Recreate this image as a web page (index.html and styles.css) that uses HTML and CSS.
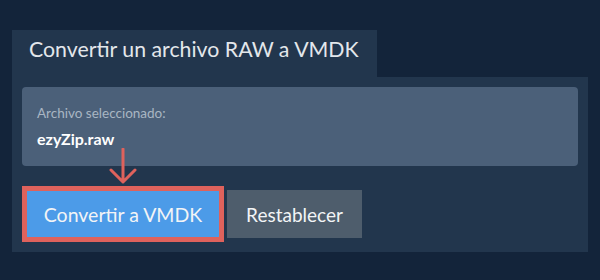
FILE: index.html
```html
<!DOCTYPE html>
<html lang="es">
<head>
  <meta charset="UTF-8" />
  <meta name="viewport" content="width=device-width, initial-scale=1.0"/>
  <title>Convertir RAW a VMDK</title>
  <link rel="stylesheet" href="styles.css">
</head>
<body>
  <div class="converter">
    <div class="tab">
      <h2>Convertir un archivo RAW a VMDK</h2>
    </div>
    <div class="panel">
      <div class="file-info">
        <p class="file-label">Archivo seleccionado:</p>
        <p class="file-name">ezyZip.raw</p>
      </div>

      <div class="actions">
        <div class="highlight">
          <button class="btn btn-convert">Convertir a VMDK</button>
        </div>
        <button class="btn btn-reset">Restablecer</button>
      </div>

      <svg class="pointer" width="30" height="36" viewBox="0 0 30 36">
        <path d="M15 1 V34 M3 22 L15 34 L27 22" fill="none" stroke="#df625c" stroke-width="3" stroke-linecap="round" stroke-linejoin="round"/>
      </svg>
    </div>
  </div>
</body>
</html>
```

FILE: styles.css
```css
* {
  margin: 0;
  padding: 0;
  box-sizing: border-box;
  font-family: Lato, 'Open Sans', sans-serif;
}

body {
  background-color: #13243a;
}

.converter {
  padding: 30px 12px;
}

.tab {
  width: 365px;
  height: 47px;
  padding: 6px 17px 0;
  background-color: #22364d;
}

.tab h2 {
  font-size: 21.3px;
  line-height: 26px;
  font-weight: 400;
  white-space: nowrap;
  color: #e3e7eb;
}

.panel {
  position: relative;
  height: 175px;
  padding: 10px;
  background-color: #22364d;
}

.file-info {
  height: 79px;
  padding: 18px 15px 0;
  border-radius: 4px;
  background-color: #4b6079;
}

.file-label {
  font-size: 13.5px;
  line-height: 16px;
  color: #a9b6c3;
}

.file-name {
  margin-top: 8px;
  font-size: 16px;
  line-height: 20px;
  font-weight: 700;
  color: #fff;
}

.actions {
  display: flex;
  align-items: center;
  gap: 3px;
  margin-top: 20px;
}

.highlight {
  border: 5px solid #df625c;
}

.btn {
  border: none;
  font-size: 19.5px;
  color: #f2f4f6;
  cursor: pointer;
}

.btn-convert {
  display: block;
  width: 192px;
  height: 46px;
  background-color: #4c9be8;
}

.btn-reset {
  width: 135px;
  height: 48px;
  font-size: 19px;
  background-color: #4e5d6c;
}

.pointer {
  position: absolute;
  left: 96px;
  top: 71px;
}
```
